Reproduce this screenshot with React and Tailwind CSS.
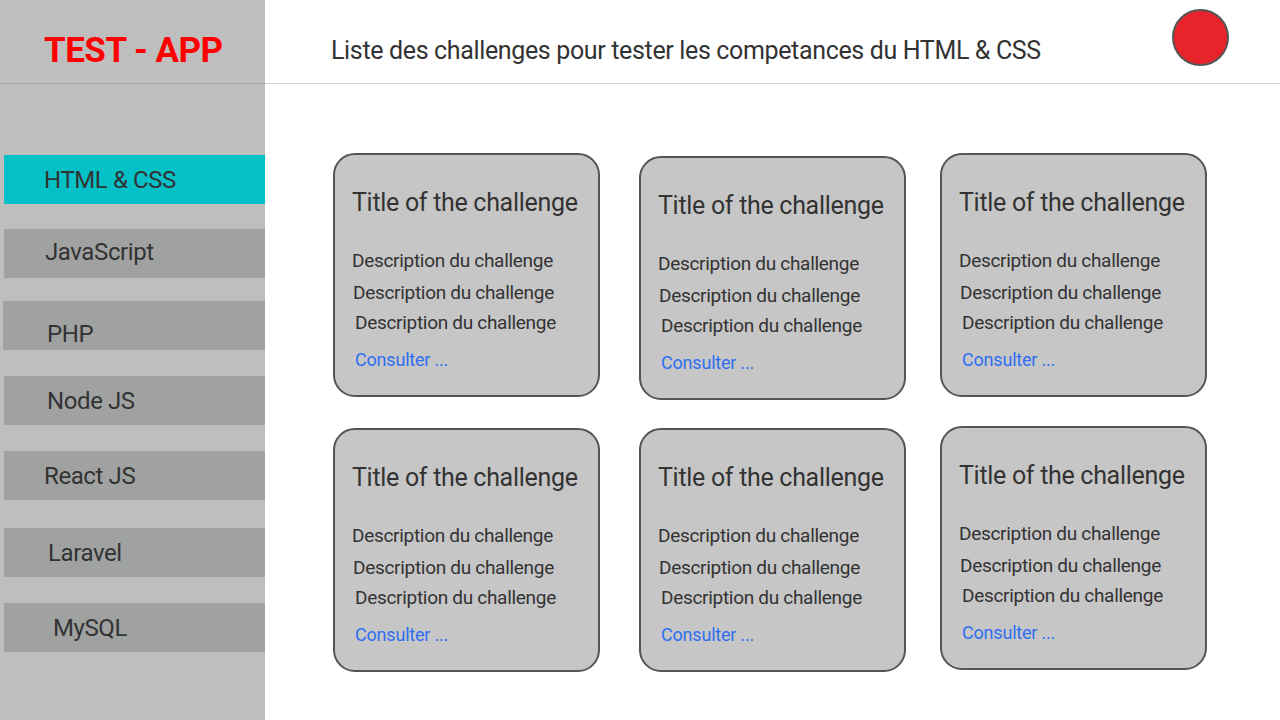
const menu = [
  { label: "HTML & CSS", active: true, pad: "pl-[40px]", mt: "mt-0" },
  { label: "JavaScript", pad: "pl-[41px] pb-[4px]", mt: "mt-[25px]" },
  { label: "PHP", pad: "pl-[44px] pt-[16px]", mt: "mt-[23px]", shift: "-ml-px" },
  { label: "Node JS", pad: "pl-[43px]", mt: "mt-[26px]" },
  { label: "React JS", pad: "pl-[40px]", mt: "mt-[26px]" },
  { label: "Laravel", pad: "pl-[44px]", mt: "mt-[28px]" },
  { label: "MySQL", pad: "pl-[49px]", mt: "mt-[26px]" },
];

const cards = [
  { id: 1, pos: "mt-0" },
  { id: 2, pos: "mt-[3px] ml-[2px]" },
  { id: 3, pos: "mt-0 -ml-px" },
  { id: 4, pos: "mt-0" },
  { id: 5, pos: "mt-0 ml-[2px]" },
  { id: 6, pos: "-mt-[2px] -ml-px" },
];

const ChallengeCard = ({ pos }) => (
  <div
    className={`${pos} h-[244px] w-[267px] rounded-[22px] border-2 border-[#555] bg-[#c6c6c6] pl-[17px] pt-[30px] text-[#333]`}
  >
    <h2 className="whitespace-nowrap text-[25px] leading-[36px] tracking-[-0.3px]">Title of the challenge</h2>
    <div className="mt-[25px] text-[19px] leading-[30px] tracking-[-0.3px]">
      <p className="h-[32px]">Description du challenge</p>
      <p className="pl-px">Description du challenge</p>
      <p className="pl-[3px]">Description du challenge</p>
    </div>
    <a href="#" className="mt-[7px] block pl-[3px] text-[18px] leading-[30px] tracking-[-0.2px] text-[#2f6ff2]">
      Consulter ...
    </a>
  </div>
);

const App = () => {
  return (
    <div className="flex h-[720px] w-[1280px] overflow-hidden bg-white font-['Roboto',sans-serif]">
      <aside className="flex w-[265px] shrink-0 flex-col bg-[#bebebe]">
        <div className="flex h-[84px] items-center border-b border-[#a9a9a9] pl-[44px] pt-[20px]">
          <span className="text-[35px] font-bold tracking-[-0.5px] text-[#ff0000]">
            TEST - APP
          </span>
        </div>
        <nav className="mt-[71px] flex flex-col pl-[4px]">
          {menu.map((item) => (
            <div
              key={item.label}
              className={`${item.mt} ${item.shift || ""} ${item.pad} flex h-[49px] items-center text-[24px] tracking-[-0.4px] text-[#333] ${
                item.active ? "bg-[#04c1c8]" : "bg-[#a0a2a1]"
              }`}
            >
              {item.label}
            </div>
          ))}
        </nav>
      </aside>

      <main className="flex flex-1 flex-col">
        <header className="flex h-[84px] items-center justify-between border-b border-[#d3d3d3] pl-[66px] pr-[51px]">
          <h1 className="pt-[18px] text-[25px] tracking-[-0.35px] text-[#333]">
            Liste des challenges pour tester les competances du HTML &amp; CSS
          </h1>
          <div className="h-[57px] w-[57px] -translate-y-[4px] rounded-full border-2 border-[#555] bg-[#e8232b]" />
        </header>

        <section className="grid grid-cols-[267px_267px_267px] gap-x-[37px] gap-y-[28px] pl-[68px] pt-[69px]">
          {cards.map((c) => (
            <ChallengeCard key={c.id} pos={c.pos} />
          ))}
        </section>
      </main>
    </div>
  );
};

export default App;
